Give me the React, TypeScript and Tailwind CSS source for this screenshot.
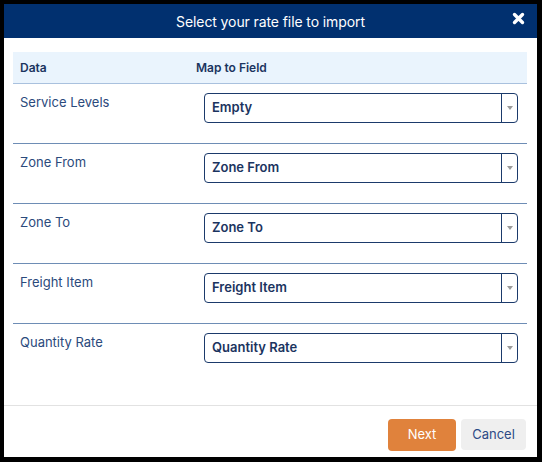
import React from "react";

const rows = [
  { label: "Service Levels", value: "Empty" },
  { label: "Zone From", value: "Zone From" },
  { label: "Zone To", value: "Zone To" },
  { label: "Freight Item", value: "Freight Item" },
  { label: "Quantity Rate", value: "Quantity Rate" },
];

function Select({ value }: { value: string }) {
  return (
    <div className="flex h-[30px] w-[314px] items-stretch rounded-[4px] border border-[#1b3a6b] bg-white">
      <div className="flex flex-1 items-center pl-[7px] text-[13px] font-semibold text-[#1b3460]">
        {value}
      </div>
      <div className="flex w-[16px] items-center justify-center border-l border-[#1b3a6b]">
        <svg width="6" height="4" viewBox="0 0 6 4">
          <path d="M0 0 L6 0 L3 4 Z" fill="#9a9a9a" />
        </svg>
      </div>
    </div>
  );
}

export default function App() {
  return (
    <div
      className="h-[462px] w-[542px] bg-black pl-[4px] pt-[4px] pr-[5px] pb-[5px]"
      style={{ fontFamily: "Inter, 'Noto Sans', sans-serif" }}
    >
      <div className="flex h-full w-full flex-col bg-white">
        <div className="relative flex h-[34px] items-center justify-center bg-[#01306f]">
          <span className="text-[14px] tracking-[-0.1px] text-white">Select your rate file to import</span>
          <span className="absolute right-[12px] top-[8px] text-white">
            <svg width="13" height="13" viewBox="0 0 13 13">
              <path d="M2.5 2.5 L10.5 10.5 M10.5 2.5 L2.5 10.5" stroke="white" strokeWidth="3.4" strokeLinecap="round" />
            </svg>
          </span>
        </div>
        <div className="flex-1 px-[9px] pr-[10px] pt-[14px]">
          <div className="flex h-[32px] items-center border-b border-[#a9c1de] bg-[#eaf4fd] pt-[1px] text-[12px] font-semibold text-[#1b3460]">
            <div className="w-[183px] pl-[7px]">Data</div>
            <div>Map to Field</div>
          </div>
          {rows.map((r, i) => (
            <div
              key={r.label}
              className={`flex h-[60px] items-start pt-[9px] ${i < rows.length - 1 ? "border-b border-[#6e8db5]" : ""}`}
            >
              <div className="w-[191px] pl-[7px] text-[13px] leading-[18px] text-[#2b4a7c]">
                {r.label}
              </div>
              <Select value={r.value} />
            </div>
          ))}
        </div>
        <div className="flex h-[52px] items-start justify-end gap-[5px] border-t border-[#e2e2e2] pr-[11px] pt-[13px]">
          <button className="h-[32px] w-[68px] rounded-[4px] bg-[#e0823c] text-[13px] text-white">
            Next
          </button>
          <button className="h-[31px] w-[65px] rounded-[4px] bg-[#efefef] text-[13px] text-[#2c4a86]">
            Cancel
          </button>
        </div>
      </div>
    </div>
  );
}
